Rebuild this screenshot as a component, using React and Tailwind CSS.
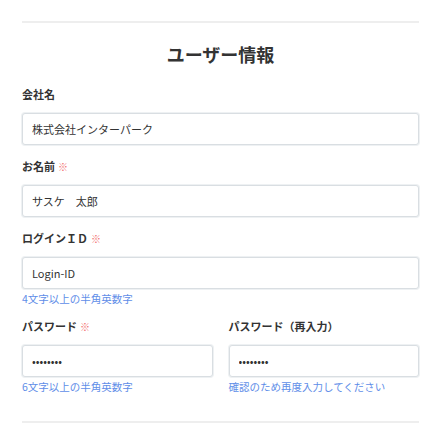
const Label = ({ children, required }) => (
  <div className="h-[18px] mb-[10px] flex items-center text-[11px] font-bold text-[#333]">
    <span>{children}</span>
    {required && <span className="ml-[3px] text-[10px] font-normal text-[#f26d6d]">※</span>}
  </div>
);

const Input = ({ value, type = "text" }) => (
  <input
    type={type}
    defaultValue={value}
    className="w-full h-[32px] px-[9px] text-[11px] text-[#333] bg-white border border-[#d9dee2] rounded-[3px] shadow-[0_0_0_1px_#eef1f3] outline-none"
  />
);

const Hint = ({ children }) => (
  <div className="mt-[2px] h-[16px] flex items-center text-[10.5px] text-[#5f8ee8]">{children}</div>
);

export default function App() {
  return (
    <div
      className="w-[433px] h-[432px] bg-white pl-[22px] pr-[14px] pt-[21px]"
      style={{ fontFamily: '"Noto Sans CJK JP", "Noto Sans", sans-serif' }}
    >
      <div className="h-[2px] bg-[#eeeeee]" />
      <h1 className="mt-[17px] h-[28px] flex items-center justify-center text-[18px] font-bold text-[#333]">
        ユーザー情報
      </h1>
      <div className="mt-[17px]">
        <Label>会社名</Label>
        <Input value="株式会社インターパーク" />
      </div>
      <div className="mt-[12px]">
        <Label required>お名前</Label>
        <Input value="サスケ　太郎" />
      </div>
      <div className="mt-[12px]">
        <Label required>ログインＩＤ</Label>
        <Input value="Login-ID" />
        <Hint>4文字以上の半角英数字</Hint>
      </div>
      <div className="mt-[10px] grid grid-cols-2 gap-[16px]">
        <div>
          <Label required>パスワード</Label>
          <Input type="password" value="password" />
          <Hint>6文字以上の半角英数字</Hint>
        </div>
        <div>
          <Label>パスワード（再入力）</Label>
          <Input type="password" value="password" />
          <Hint>確認のため再度入力してください</Hint>
        </div>
      </div>
      <div className="mt-[26px] h-[2px] bg-[#eeeeee]" />
    </div>
  );
}
